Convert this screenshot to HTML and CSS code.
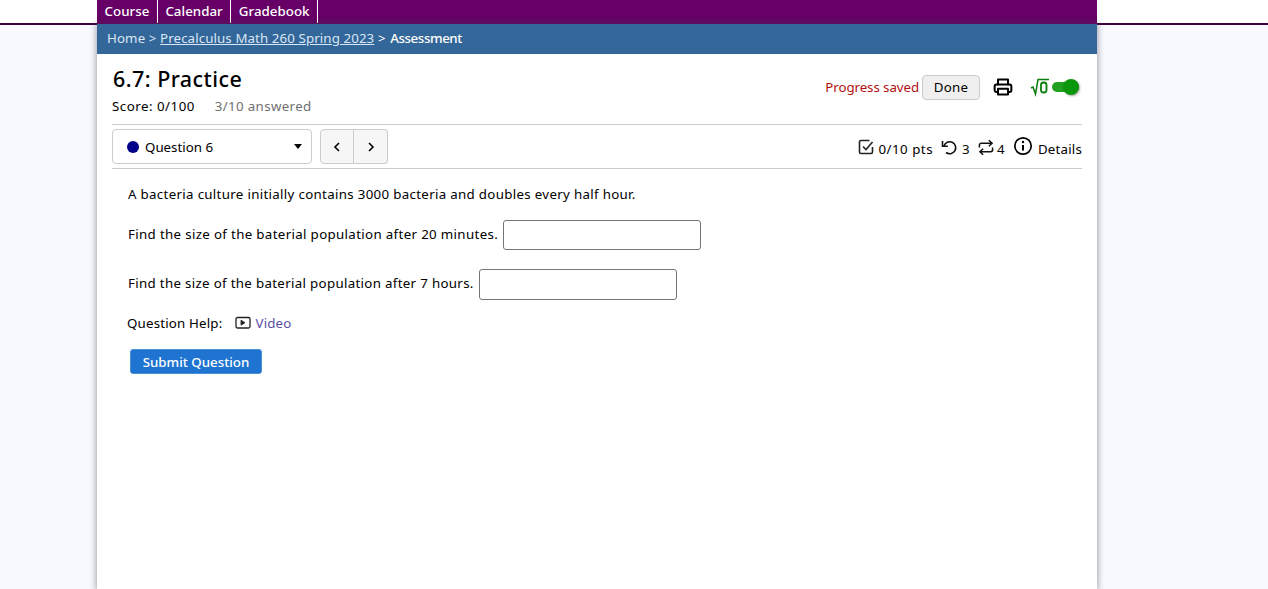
FILE: index.html
```html
<!DOCTYPE html>
<html lang="en">
<head>
<meta charset="utf-8">
<title>6.7: Practice</title>
<link rel="stylesheet" href="styles.css">
</head>
<body>
<header class="topband">
  <nav class="topnav">
    <a class="tab" href="#">Course</a>
    <a class="tab" href="#">Calendar</a>
    <a class="tab" href="#">Gradebook</a>
  </nav>
</header>
<div class="page">
  <div class="crumbs"><span class="crumb-home">Home &gt; </span><a href="#">Precalculus Math 260 Spring 2023</a><span class="crumb-sep"> &gt; </span><span class="crumb-cur">Assessment</span></div>
  <main class="content">
    <div class="headrow">
      <div class="headleft">
        <h1 class="title">6.7: Practice</h1>
        <div class="score"><span>Score: 0/100</span><span class="answered">3/10 answered</span></div>
      </div>
      <div class="headright">
        <span class="saved">Progress saved</span>
        <button class="done" type="button">Done</button>
        <svg class="printer" width="20" height="20" viewBox="0 0 24 24" fill="none" stroke="#000" stroke-width="2.4" stroke-linejoin="round" stroke-linecap="round"><path d="M6 9V3h12v6"/><path d="M6 18H4a2 2 0 0 1-2-2v-5a2 2 0 0 1 2-2h16a2 2 0 0 1 2 2v5a2 2 0 0 1-2 2h-2"/><path d="M6 14h12v7H6z"/></svg>
        <span class="mathtoggle">
          <svg class="sqrt" width="20" height="20" viewBox="0 0 20 20" fill="none" stroke="#0a7d0a"><path d="M1 11l2-1 2.500 7L8 2.500h11" stroke-width="1.500"/><rect x="11" y="5.500" width="5.500" height="10" rx="2.500" stroke-width="1.800"/></svg>
          <span class="switch"><span class="knob"></span></span>
        </span>
      </div>
    </div>
    <div class="navrow">
      <div class="qselect"><span class="dot"></span><span class="qlabel">Question 6</span><span class="caret"></span></div>
      <div class="pager">
        <button class="pagebtn" type="button" aria-label="Previous"><svg width="12" height="12" viewBox="0 0 12 12" fill="none" stroke="#000" stroke-width="1.600"><path d="M8 2L4 6l4 4"/></svg></button>
        <button class="pagebtn" type="button" aria-label="Next"><svg width="12" height="12" viewBox="0 0 12 12" fill="none" stroke="#000" stroke-width="1.600"><path d="M4 2l4 4-4 4"/></svg></button>
      </div>
      <div class="meta">
        <span class="metaitem"><svg width="16" height="16" viewBox="0 0 16 16" fill="none" stroke="#222" stroke-width="1.600" class="metaicon"><path d="M14.500 8v5a1.500 1.500 0 0 1-1.500 1.500H3A1.500 1.500 0 0 1 1.500 13V3A1.500 1.500 0 0 1 3 1.500h8.500"/><path d="M5 7.500L8 10.500 14.500 3"/></svg><span class="pts">0/10 pts</span></span>
        <span class="metaitem"><svg width="17" height="17" viewBox="0 0 17 17" fill="none" stroke="#111" stroke-width="1.600" class="metaicon"><path d="M3 7A6 6 0 1 1 5 13.500"/><path d="M1.500 2v5.200h5.300"/></svg>3</span>
        <span class="metaitem tight"><svg width="16" height="17" viewBox="0 0 17 17" fill="none" stroke="#111" stroke-width="1.600" class="metaicon"><path d="M1.500 8.500V6a2 2 0 0 1 2-2H15M11.500 0.800L15 4l-3.500 3.200"/><path d="M15.500 8.500V11a2 2 0 0 1-2 2H2M5.500 9.800L2 13l3.500 3.200"/></svg>4</span>
        <span class="metaitem details"><svg class="info" width="20" height="20" viewBox="0 0 20 20" fill="none" stroke="#000" stroke-width="1.700"><circle cx="10" cy="10" r="8.200"/><path d="M10 9v5.500" stroke-width="2"/><circle cx="10" cy="6" r="1.200" fill="#000" stroke="none"/></svg><span class="dettext">Details</span></span>
      </div>
    </div>
    <section class="question">
      <p class="intro">A bacteria culture initially contains 3000 bacteria and doubles every half hour.</p>
      <p class="prompt first">Find the size of the baterial population after 20 minutes.<input class="answer" type="text"></p>
      <p class="prompt second">Find the size of the baterial population after 7 hours.<input class="answer tall" type="text"></p>
      <div class="help"><span>Question Help:</span><svg class="video" width="16" height="14" viewBox="0 0 16 14" fill="none" stroke="#222" stroke-width="1.300"><rect x="1" y="1.500" width="14" height="10.500" rx="1.500"/><path d="M6 4.200l4 2.500-4 2.500z" fill="#222" stroke-width="0.800"/></svg><a class="videolink" href="#">Video</a></div>
      <button class="submit" type="button">Submit Question</button>
    </section>
  </main>
</div>
</body>
</html>
```
FILE: styles.css
```css
html, body { margin: 0; padding: 0; height: 100%; overflow: hidden; }
body {
  background: #f8f8ff;
  font-family: "Noto Sans", "DejaVu Sans", sans-serif;
  font-size: 13.3px;
  letter-spacing: 0.32px;
  color: #000;
}
.topband { background: #fff; border-bottom: 2px solid #3f0040; height: 23px; }
.topnav {
  margin-left: 97px;
  width: 1000px;
  height: 24px;
  background: #660066;
  display: flex;
  align-items: flex-start;
  box-sizing: border-box;
}
.tab {
  height: 23px;
  line-height: 22px;
  padding: 0 7.500px;
  color: #fff;
  text-decoration: none;
  font-weight: 500;
  letter-spacing: 0.04px;
  border-right: 1px solid #fff;
  white-space: nowrap;
}
.page {
  margin-left: 97px;
  width: 1000px;
  height: 565px;
  margin-top: -1px;
  background: #fff;
  box-shadow: 0 0 6px 1px rgba(60, 60, 70, 0.45);
  position: relative;
  z-index: 0;
}
.crumbs {
  height: 30px;
  line-height: 28px;
  background: #336699;
  padding: 0 10px;
  color: #d9e6f5;
  letter-spacing: 0.1px;
}
.crumbs a { color: #d9e6f5; }
.crumb-sep { color: #fff; margin-right: 1px; white-space: pre; }
.crumb-cur { color: #fff; font-weight: 500; letter-spacing: -0.4px; }
.content { padding: 0 15px; }
.headrow {
  display: flex;
  justify-content: space-between;
  align-items: flex-start;
  height: 70px;
  border-bottom: 1px solid #ccc;
}
.title {
  margin: 0;
  padding: 9px 0 0 1px;
  font-size: 21.500px;
  line-height: 32px;
  font-weight: 500;
  letter-spacing: 0.45px;
}
.score { display: flex; gap: 20px; line-height: 20px; margin-top: 1px; letter-spacing: 0.5px; }
.answered { color: #707070; letter-spacing: 0.35px; }
.headright { display: flex; align-items: center; padding-top: 20px; height: 26px; }
.saved { color: #b01010; margin-right: 3px; letter-spacing: -0.07px; }
.done {
  width: 58px;
  height: 25px;
  padding: 0;
  font: inherit;
  letter-spacing: inherit;
  color: #000;
  background: #efefef;
  border: 1px solid #ccc;
  border-radius: 4px;
}
.printer { margin-left: 13px; }
.mathtoggle { display: flex; align-items: center; margin-left: 17px; margin-right: 3px; }
.switch {
  position: relative;
  display: block;
  width: 27px;
  height: 10px;
  margin-left: 2px;
  border-radius: 5px;
  background: #22a022;
}
.knob {
  position: absolute;
  right: 0;
  top: -3px;
  width: 16px;
  height: 16px;
  border-radius: 50%;
  background: #0c960c;
  box-shadow: 1px 1px 2px rgba(0, 0, 0, 0.35);
}
.navrow {
  display: flex;
  align-items: center;
  height: 43px;
  border-bottom: 1px solid #ccc;
}
.qselect {
  display: flex;
  align-items: center;
  box-sizing: border-box;
  width: 200px;
  height: 35px;
  padding: 0 9px 0 14px;
  border: 1px solid #ccc;
  border-radius: 4px;
  background: #fff;
}
.dot { width: 12px; height: 12px; border-radius: 50%; background: #00008b; margin-right: 6px; }
.qlabel { flex: 1; letter-spacing: 0; }
.caret {
  width: 0;
  height: 0;
  border-left: 4px solid transparent;
  border-right: 4px solid transparent;
  border-top: 5px solid #000;
}
.pager { display: flex; margin-left: 8px; }
.pagebtn {
  box-sizing: border-box;
  width: 34px;
  height: 35px;
  padding: 0;
  display: flex;
  align-items: center;
  justify-content: center;
  background: #f6f6f6;
  border: 1px solid #ccc;
}
.pagebtn:first-child { border-radius: 4px 0 0 4px; }
.pagebtn:last-child { border-radius: 0 4px 4px 0; border-left: 0; }
.meta { margin-left: auto; display: flex; align-items: center; gap: 8px; padding-top: 5px; }
.metaitem { display: flex; align-items: center; gap: 4px; }
.metaitem.tight { gap: 3px; }
.metaicon { margin-top: -4px; }
.pts { letter-spacing: 0.5px; }
.info { margin-top: -7px; }
.dettext { letter-spacing: 0.2px; margin-left: 1px; }
.question { padding: 0 0 0 16px; }
.question p { margin: 0; }
.intro { padding-top: 15px; line-height: 20px; }
.prompt { display: flex; align-items: flex-start; gap: 5px; white-space: pre; line-height: 28px; letter-spacing: 0.34px; }
.first { margin-top: 16px !important; }
.second { margin-top: 19px !important; letter-spacing: 0.32px; }
.answer {
  box-sizing: border-box;
  width: 198px;
  height: 30px;
  border: 1px solid #767676;
  border-radius: 3px;
  background: #fff;
}
.tall { height: 31px; }
.help { display: flex; align-items: center; margin: 13px 0 0 -1px; line-height: 20px; letter-spacing: 0.18px; }
.video { margin-left: 13px; margin-right: 4px; }
.videolink { color: #5b4ea6; text-decoration: none; }
.submit {
  display: block;
  width: 132px;
  height: 25px;
  margin: 16px 0 0 2px;
  padding: 0;
  font: inherit;
  font-weight: 500;
  letter-spacing: 0;
  color: #fff;
  background: #1e74d0;
  border: 1px solid #4a90d8;
  border-radius: 3px;
}
```
